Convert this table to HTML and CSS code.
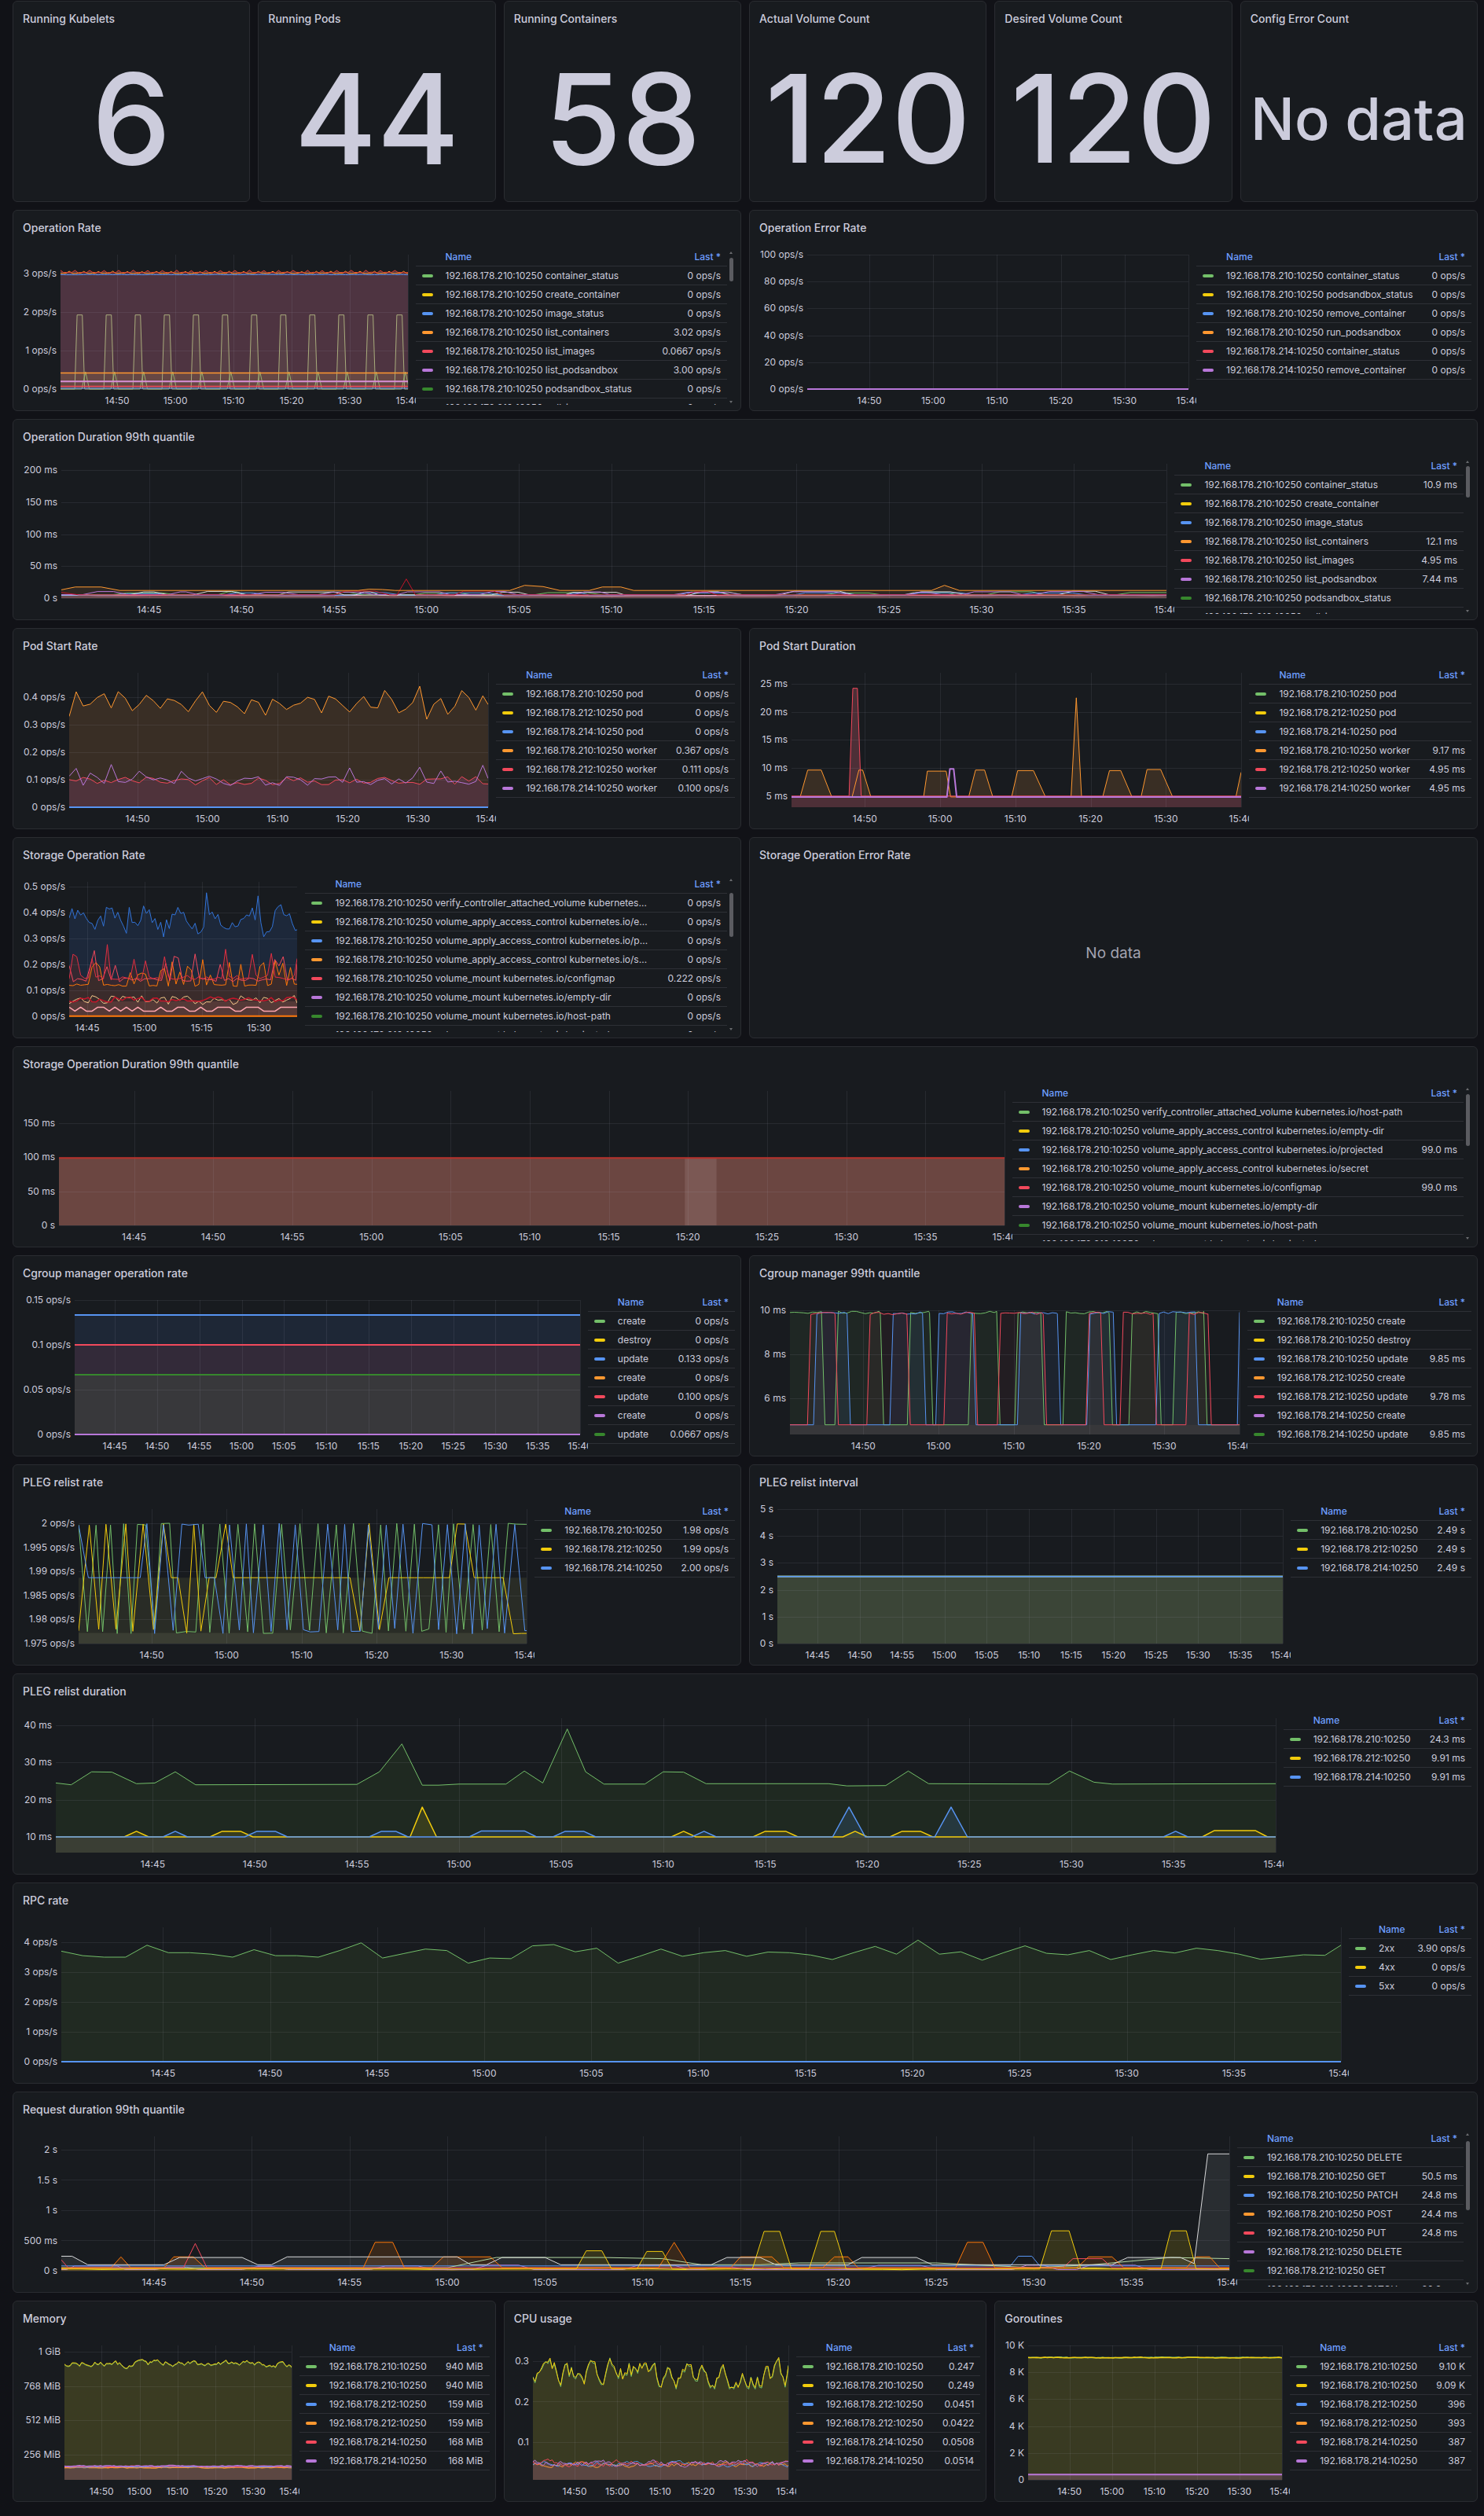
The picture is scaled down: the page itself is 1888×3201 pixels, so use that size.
FILE: index.html
```html
<!DOCTYPE html>
<html lang="en">
<head>
<meta charset="utf-8">
<title>Kubelet</title>
<link rel="stylesheet" href="styles.css">
</head>
<body>
<main class="dash">

<div class="row r6">
  <section class="panel"><h2 class="ptitle">Running Kubelets</h2><div class="stat-val">6</div></section>
  <section class="panel"><h2 class="ptitle">Running Pods</h2><div class="stat-val">44</div></section>
  <section class="panel"><h2 class="ptitle">Running Containers</h2><div class="stat-val">58</div></section>
  <section class="panel"><h2 class="ptitle">Actual Volume Count</h2><div class="stat-val md">120</div></section>
  <section class="panel"><h2 class="ptitle">Desired Volume Count</h2><div class="stat-val md">120</div></section>
  <section class="panel"><h2 class="ptitle">Config Error Count</h2><div class="stat-val sm">No data</div></section>
</div>

<div class="row r2">
  <section class="panel">
    <h2 class="ptitle">Operation Rate</h2>
    <div class="pbody">
      <div class="plot" data-chart="oprate"></div>
      <div class="legend scroll">
        <div class="lg">
          <span class="lh"></span><span class="lh">Name</span><span class="lh lv">Last *</span>
          <span class="ls"><i class="sw c1"></i></span><span class="ln">192.168.178.210:10250 container_status</span><span class="lv">0 ops/s</span>
          <span class="ls"><i class="sw c2"></i></span><span class="ln">192.168.178.210:10250 create_container</span><span class="lv">0 ops/s</span>
          <span class="ls"><i class="sw c3"></i></span><span class="ln">192.168.178.210:10250 image_status</span><span class="lv">0 ops/s</span>
          <span class="ls"><i class="sw c4"></i></span><span class="ln">192.168.178.210:10250 list_containers</span><span class="lv">3.02 ops/s</span>
          <span class="ls"><i class="sw c5"></i></span><span class="ln">192.168.178.210:10250 list_images</span><span class="lv">0.0667 ops/s</span>
          <span class="ls"><i class="sw c6"></i></span><span class="ln">192.168.178.210:10250 list_podsandbox</span><span class="lv">3.00 ops/s</span>
          <span class="ls"><i class="sw c7"></i></span><span class="ln">192.168.178.210:10250 podsandbox_status</span><span class="lv">0 ops/s</span>
          <span class="ls"><i class="sw c8"></i></span><span class="ln">192.168.178.210:10250 pull_image</span><span class="lv">0 ops/s</span>
          <span class="ls"><i class="sw c9"></i></span><span class="ln">192.168.178.210:10250 remove_container</span><span class="lv">0 ops/s</span>
          <span class="ls"><i class="sw c10"></i></span><span class="ln">192.168.178.212:10250 list_podsandbox_stats</span><span class="lv">0 ops/s</span>
        </div>
        <div class="sb"><b class="up"></b><b class="th" style="top:13px;height:30px"></b><b class="dn"></b></div>
      </div>
    </div>
  </section>
  <section class="panel">
    <h2 class="ptitle">Operation Error Rate</h2>
    <div class="pbody">
      <div class="plot" data-chart="operr"></div>
      <div class="legend">
        <div class="lg">
          <span class="lh"></span><span class="lh">Name</span><span class="lh lv">Last *</span>
          <span class="ls"><i class="sw c1"></i></span><span class="ln">192.168.178.210:10250 container_status</span><span class="lv">0 ops/s</span>
          <span class="ls"><i class="sw c2"></i></span><span class="ln">192.168.178.210:10250 podsandbox_status</span><span class="lv">0 ops/s</span>
          <span class="ls"><i class="sw c3"></i></span><span class="ln">192.168.178.210:10250 remove_container</span><span class="lv">0 ops/s</span>
          <span class="ls"><i class="sw c4"></i></span><span class="ln">192.168.178.210:10250 run_podsandbox</span><span class="lv">0 ops/s</span>
          <span class="ls"><i class="sw c5"></i></span><span class="ln">192.168.178.214:10250 container_status</span><span class="lv">0 ops/s</span>
          <span class="ls"><i class="sw c6"></i></span><span class="ln">192.168.178.214:10250 remove_container</span><span class="lv">0 ops/s</span>
        </div>
      </div>
    </div>
  </section>
</div>

<div class="row r1">
  <section class="panel">
    <h2 class="ptitle">Operation Duration 99th quantile</h2>
    <div class="pbody">
      <div class="plot" data-chart="opdur"></div>
      <div class="legend scroll">
        <div class="lg">
          <span class="lh"></span><span class="lh">Name</span><span class="lh lv">Last *</span>
          <span class="ls"><i class="sw c1"></i></span><span class="ln">192.168.178.210:10250 container_status</span><span class="lv">10.9 ms</span>
          <span class="ls"><i class="sw c2"></i></span><span class="ln">192.168.178.210:10250 create_container</span><span class="lv"></span>
          <span class="ls"><i class="sw c3"></i></span><span class="ln">192.168.178.210:10250 image_status</span><span class="lv"></span>
          <span class="ls"><i class="sw c4"></i></span><span class="ln">192.168.178.210:10250 list_containers</span><span class="lv">12.1 ms</span>
          <span class="ls"><i class="sw c5"></i></span><span class="ln">192.168.178.210:10250 list_images</span><span class="lv">4.95 ms</span>
          <span class="ls"><i class="sw c6"></i></span><span class="ln">192.168.178.210:10250 list_podsandbox</span><span class="lv">7.44 ms</span>
          <span class="ls"><i class="sw c7"></i></span><span class="ln">192.168.178.210:10250 podsandbox_status</span><span class="lv"></span>
          <span class="ls"><i class="sw c8"></i></span><span class="ln">192.168.178.210:10250 pull_image</span><span class="lv"></span>
          <span class="ls"><i class="sw c9"></i></span><span class="ln">192.168.178.212:10250 list_podsandbox_stats</span><span class="lv"></span>
        </div>
        <div class="sb"><b class="up"></b><b class="th" style="top:12px;height:40px"></b><b class="dn"></b></div>
      </div>
    </div>
  </section>
</div>

<div class="row r2">
  <section class="panel">
    <h2 class="ptitle">Pod Start Rate</h2>
    <div class="pbody">
      <div class="plot" data-chart="podrate"></div>
      <div class="legend">
        <div class="lg">
          <span class="lh"></span><span class="lh">Name</span><span class="lh lv">Last *</span>
          <span class="ls"><i class="sw c1"></i></span><span class="ln">192.168.178.210:10250 pod</span><span class="lv">0 ops/s</span>
          <span class="ls"><i class="sw c2"></i></span><span class="ln">192.168.178.212:10250 pod</span><span class="lv">0 ops/s</span>
          <span class="ls"><i class="sw c3"></i></span><span class="ln">192.168.178.214:10250 pod</span><span class="lv">0 ops/s</span>
          <span class="ls"><i class="sw c4"></i></span><span class="ln">192.168.178.210:10250 worker</span><span class="lv">0.367 ops/s</span>
          <span class="ls"><i class="sw c5"></i></span><span class="ln">192.168.178.212:10250 worker</span><span class="lv">0.111 ops/s</span>
          <span class="ls"><i class="sw c6"></i></span><span class="ln">192.168.178.214:10250 worker</span><span class="lv">0.100 ops/s</span>
        </div>
      </div>
    </div>
  </section>
  <section class="panel">
    <h2 class="ptitle">Pod Start Duration</h2>
    <div class="pbody">
      <div class="plot" data-chart="poddur"></div>
      <div class="legend">
        <div class="lg">
          <span class="lh"></span><span class="lh">Name</span><span class="lh lv">Last *</span>
          <span class="ls"><i class="sw c1"></i></span><span class="ln">192.168.178.210:10250 pod</span><span class="lv"></span>
          <span class="ls"><i class="sw c2"></i></span><span class="ln">192.168.178.212:10250 pod</span><span class="lv"></span>
          <span class="ls"><i class="sw c3"></i></span><span class="ln">192.168.178.214:10250 pod</span><span class="lv"></span>
          <span class="ls"><i class="sw c4"></i></span><span class="ln">192.168.178.210:10250 worker</span><span class="lv">9.17 ms</span>
          <span class="ls"><i class="sw c5"></i></span><span class="ln">192.168.178.212:10250 worker</span><span class="lv">4.95 ms</span>
          <span class="ls"><i class="sw c6"></i></span><span class="ln">192.168.178.214:10250 worker</span><span class="lv">4.95 ms</span>
        </div>
      </div>
    </div>
  </section>
</div>

<div class="row r2">
  <section class="panel">
    <h2 class="ptitle">Storage Operation Rate</h2>
    <div class="pbody">
      <div class="plot" data-chart="storrate"></div>
      <div class="legend scroll">
        <div class="lg">
          <span class="lh"></span><span class="lh">Name</span><span class="lh lv">Last *</span>
          <span class="ls"><i class="sw c1"></i></span><span class="ln">192.168.178.210:10250 verify_controller_attached_volume kubernetes.io/host-path</span><span class="lv">0 ops/s</span>
          <span class="ls"><i class="sw c2"></i></span><span class="ln">192.168.178.210:10250 volume_apply_access_control kubernetes.io/empty-dir</span><span class="lv">0 ops/s</span>
          <span class="ls"><i class="sw c3"></i></span><span class="ln">192.168.178.210:10250 volume_apply_access_control kubernetes.io/projected</span><span class="lv">0 ops/s</span>
          <span class="ls"><i class="sw c4"></i></span><span class="ln">192.168.178.210:10250 volume_apply_access_control kubernetes.io/secret</span><span class="lv">0 ops/s</span>
          <span class="ls"><i class="sw c5"></i></span><span class="ln">192.168.178.210:10250 volume_mount kubernetes.io/configmap</span><span class="lv">0.222 ops/s</span>
          <span class="ls"><i class="sw c6"></i></span><span class="ln">192.168.178.210:10250 volume_mount kubernetes.io/empty-dir</span><span class="lv">0 ops/s</span>
          <span class="ls"><i class="sw c7"></i></span><span class="ln">192.168.178.210:10250 volume_mount kubernetes.io/host-path</span><span class="lv">0 ops/s</span>
          <span class="ls"><i class="sw c8"></i></span><span class="ln">192.168.178.210:10250 volume_mount kubernetes.io/projected</span><span class="lv">0 ops/s</span>
        </div>
        <div class="sb"><b class="up"></b><b class="th" style="top:23px;height:56px"></b><b class="dn"></b></div>
      </div>
    </div>
  </section>
  <section class="panel">
    <h2 class="ptitle">Storage Operation Error Rate</h2>
    <div class="nodata">No data</div>
  </section>
</div>

<div class="row r1">
  <section class="panel">
    <h2 class="ptitle">Storage Operation Duration 99th quantile</h2>
    <div class="pbody">
      <div class="plot" data-chart="stordur"></div>
      <div class="legend scroll">
        <div class="lg">
          <span class="lh"></span><span class="lh">Name</span><span class="lh lv">Last *</span>
          <span class="ls"><i class="sw c1"></i></span><span class="ln">192.168.178.210:10250 verify_controller_attached_volume kubernetes.io/host-path</span><span class="lv"></span>
          <span class="ls"><i class="sw c2"></i></span><span class="ln">192.168.178.210:10250 volume_apply_access_control kubernetes.io/empty-dir</span><span class="lv"></span>
          <span class="ls"><i class="sw c3"></i></span><span class="ln">192.168.178.210:10250 volume_apply_access_control kubernetes.io/projected</span><span class="lv">99.0 ms</span>
          <span class="ls"><i class="sw c4"></i></span><span class="ln">192.168.178.210:10250 volume_apply_access_control kubernetes.io/secret</span><span class="lv"></span>
          <span class="ls"><i class="sw c5"></i></span><span class="ln">192.168.178.210:10250 volume_mount kubernetes.io/configmap</span><span class="lv">99.0 ms</span>
          <span class="ls"><i class="sw c6"></i></span><span class="ln">192.168.178.210:10250 volume_mount kubernetes.io/empty-dir</span><span class="lv"></span>
          <span class="ls"><i class="sw c7"></i></span><span class="ln">192.168.178.210:10250 volume_mount kubernetes.io/host-path</span><span class="lv"></span>
          <span class="ls"><i class="sw c8"></i></span><span class="ln">192.168.178.210:10250 volume_mount kubernetes.io/projected</span><span class="lv"></span>
        </div>
        <div class="sb"><b class="up"></b><b class="th" style="top:13px;height:66px"></b><b class="dn"></b></div>
      </div>
    </div>
  </section>
</div>

<div class="row r2">
  <section class="panel">
    <h2 class="ptitle">Cgroup manager operation rate</h2>
    <div class="pbody">
      <div class="plot" data-chart="cgrate"></div>
      <div class="legend">
        <div class="lg">
          <span class="lh"></span><span class="lh">Name</span><span class="lh lv">Last *</span>
          <span class="ls"><i class="sw c1"></i></span><span class="ln">create</span><span class="lv">0 ops/s</span>
          <span class="ls"><i class="sw c2"></i></span><span class="ln">destroy</span><span class="lv">0 ops/s</span>
          <span class="ls"><i class="sw c3"></i></span><span class="ln">update</span><span class="lv">0.133 ops/s</span>
          <span class="ls"><i class="sw c4"></i></span><span class="ln">create</span><span class="lv">0 ops/s</span>
          <span class="ls"><i class="sw c5"></i></span><span class="ln">update</span><span class="lv">0.100 ops/s</span>
          <span class="ls"><i class="sw c6"></i></span><span class="ln">create</span><span class="lv">0 ops/s</span>
          <span class="ls"><i class="sw c7"></i></span><span class="ln">update</span><span class="lv">0.0667 ops/s</span>
        </div>
      </div>
    </div>
  </section>
  <section class="panel">
    <h2 class="ptitle">Cgroup manager 99th quantile</h2>
    <div class="pbody">
      <div class="plot" data-chart="cg99"></div>
      <div class="legend">
        <div class="lg">
          <span class="lh"></span><span class="lh">Name</span><span class="lh lv">Last *</span>
          <span class="ls"><i class="sw c1"></i></span><span class="ln">192.168.178.210:10250 create</span><span class="lv"></span>
          <span class="ls"><i class="sw c2"></i></span><span class="ln">192.168.178.210:10250 destroy</span><span class="lv"></span>
          <span class="ls"><i class="sw c3"></i></span><span class="ln">192.168.178.210:10250 update</span><span class="lv">9.85 ms</span>
          <span class="ls"><i class="sw c4"></i></span><span class="ln">192.168.178.212:10250 create</span><span class="lv"></span>
          <span class="ls"><i class="sw c5"></i></span><span class="ln">192.168.178.212:10250 update</span><span class="lv">9.78 ms</span>
          <span class="ls"><i class="sw c6"></i></span><span class="ln">192.168.178.214:10250 create</span><span class="lv"></span>
          <span class="ls"><i class="sw c7"></i></span><span class="ln">192.168.178.214:10250 update</span><span class="lv">9.85 ms</span>
        </div>
      </div>
    </div>
  </section>
</div>

<div class="row r2">
  <section class="panel">
    <h2 class="ptitle">PLEG relist rate</h2>
    <div class="pbody">
      <div class="plot" data-chart="plegrate"></div>
      <div class="legend">
        <div class="lg">
          <span class="lh"></span><span class="lh">Name</span><span class="lh lv">Last *</span>
          <span class="ls"><i class="sw c1"></i></span><span class="ln">192.168.178.210:10250</span><span class="lv">1.98 ops/s</span>
          <span class="ls"><i class="sw c2"></i></span><span class="ln">192.168.178.212:10250</span><span class="lv">1.99 ops/s</span>
          <span class="ls"><i class="sw c3"></i></span><span class="ln">192.168.178.214:10250</span><span class="lv">2.00 ops/s</span>
        </div>
      </div>
    </div>
  </section>
  <section class="panel">
    <h2 class="ptitle">PLEG relist interval</h2>
    <div class="pbody">
      <div class="plot" data-chart="plegint"></div>
      <div class="legend">
        <div class="lg">
          <span class="lh"></span><span class="lh">Name</span><span class="lh lv">Last *</span>
          <span class="ls"><i class="sw c1"></i></span><span class="ln">192.168.178.210:10250</span><span class="lv">2.49 s</span>
          <span class="ls"><i class="sw c2"></i></span><span class="ln">192.168.178.212:10250</span><span class="lv">2.49 s</span>
          <span class="ls"><i class="sw c3"></i></span><span class="ln">192.168.178.214:10250</span><span class="lv">2.49 s</span>
        </div>
      </div>
    </div>
  </section>
</div>

<div class="row r1">
  <section class="panel">
    <h2 class="ptitle">PLEG relist duration</h2>
    <div class="pbody">
      <div class="plot" data-chart="plegdur"></div>
      <div class="legend">
        <div class="lg">
          <span class="lh"></span><span class="lh">Name</span><span class="lh lv">Last *</span>
          <span class="ls"><i class="sw c1"></i></span><span class="ln">192.168.178.210:10250</span><span class="lv">24.3 ms</span>
          <span class="ls"><i class="sw c2"></i></span><span class="ln">192.168.178.212:10250</span><span class="lv">9.91 ms</span>
          <span class="ls"><i class="sw c3"></i></span><span class="ln">192.168.178.214:10250</span><span class="lv">9.91 ms</span>
        </div>
      </div>
    </div>
  </section>
</div>

<div class="row r1">
  <section class="panel">
    <h2 class="ptitle">RPC rate</h2>
    <div class="pbody">
      <div class="plot" data-chart="rpc"></div>
      <div class="legend">
        <div class="lg">
          <span class="lh"></span><span class="lh">Name</span><span class="lh lv">Last *</span>
          <span class="ls"><i class="sw c1"></i></span><span class="ln">2xx</span><span class="lv">3.90 ops/s</span>
          <span class="ls"><i class="sw c2"></i></span><span class="ln">4xx</span><span class="lv">0 ops/s</span>
          <span class="ls"><i class="sw c3"></i></span><span class="ln">5xx</span><span class="lv">0 ops/s</span>
        </div>
      </div>
    </div>
  </section>
</div>

<div class="row r1">
  <section class="panel">
    <h2 class="ptitle">Request duration 99th quantile</h2>
    <div class="pbody">
      <div class="plot" data-chart="reqdur"></div>
      <div class="legend scroll">
        <div class="lg">
          <span class="lh"></span><span class="lh">Name</span><span class="lh lv">Last *</span>
          <span class="ls"><i class="sw c1"></i></span><span class="ln">192.168.178.210:10250 DELETE</span><span class="lv"></span>
          <span class="ls"><i class="sw c2"></i></span><span class="ln">192.168.178.210:10250 GET</span><span class="lv">50.5 ms</span>
          <span class="ls"><i class="sw c3"></i></span><span class="ln">192.168.178.210:10250 PATCH</span><span class="lv">24.8 ms</span>
          <span class="ls"><i class="sw c4"></i></span><span class="ln">192.168.178.210:10250 POST</span><span class="lv">24.4 ms</span>
          <span class="ls"><i class="sw c5"></i></span><span class="ln">192.168.178.210:10250 PUT</span><span class="lv">24.8 ms</span>
          <span class="ls"><i class="sw c6"></i></span><span class="ln">192.168.178.212:10250 DELETE</span><span class="lv"></span>
          <span class="ls"><i class="sw c7"></i></span><span class="ln">192.168.178.212:10250 GET</span><span class="lv"></span>
          <span class="ls"><i class="sw c8"></i></span><span class="ln">192.168.178.212:10250 PATCH</span><span class="lv">20.3 ms</span>
        </div>
        <div class="sb"><b class="up"></b><b class="th" style="top:15px;height:88px"></b><b class="dn"></b></div>
      </div>
    </div>
  </section>
</div>

<div class="row r3">
  <section class="panel">
    <h2 class="ptitle">Memory</h2>
    <div class="pbody">
      <div class="plot" data-chart="mem"></div>
      <div class="legend">
        <div class="lg">
          <span class="lh"></span><span class="lh">Name</span><span class="lh lv">Last *</span>
          <span class="ls"><i class="sw c1"></i></span><span class="ln">192.168.178.210:10250</span><span class="lv">940 MiB</span>
          <span class="ls"><i class="sw c2"></i></span><span class="ln">192.168.178.210:10250</span><span class="lv">940 MiB</span>
          <span class="ls"><i class="sw c3"></i></span><span class="ln">192.168.178.212:10250</span><span class="lv">159 MiB</span>
          <span class="ls"><i class="sw c4"></i></span><span class="ln">192.168.178.212:10250</span><span class="lv">159 MiB</span>
          <span class="ls"><i class="sw c5"></i></span><span class="ln">192.168.178.214:10250</span><span class="lv">168 MiB</span>
          <span class="ls"><i class="sw c6"></i></span><span class="ln">192.168.178.214:10250</span><span class="lv">168 MiB</span>
        </div>
      </div>
    </div>
  </section>
  <section class="panel">
    <h2 class="ptitle">CPU usage</h2>
    <div class="pbody">
      <div class="plot" data-chart="cpu"></div>
      <div class="legend">
        <div class="lg">
          <span class="lh"></span><span class="lh">Name</span><span class="lh lv">Last *</span>
          <span class="ls"><i class="sw c1"></i></span><span class="ln">192.168.178.210:10250</span><span class="lv">0.247</span>
          <span class="ls"><i class="sw c2"></i></span><span class="ln">192.168.178.210:10250</span><span class="lv">0.249</span>
          <span class="ls"><i class="sw c3"></i></span><span class="ln">192.168.178.212:10250</span><span class="lv">0.0451</span>
          <span class="ls"><i class="sw c4"></i></span><span class="ln">192.168.178.212:10250</span><span class="lv">0.0422</span>
          <span class="ls"><i class="sw c5"></i></span><span class="ln">192.168.178.214:10250</span><span class="lv">0.0508</span>
          <span class="ls"><i class="sw c6"></i></span><span class="ln">192.168.178.214:10250</span><span class="lv">0.0514</span>
        </div>
      </div>
    </div>
  </section>
  <section class="panel">
    <h2 class="ptitle">Goroutines</h2>
    <div class="pbody">
      <div class="plot" data-chart="gor"></div>
      <div class="legend">
        <div class="lg">
          <span class="lh"></span><span class="lh">Name</span><span class="lh lv">Last *</span>
          <span class="ls"><i class="sw c1"></i></span><span class="ln">192.168.178.210:10250</span><span class="lv">9.10 K</span>
          <span class="ls"><i class="sw c2"></i></span><span class="ln">192.168.178.210:10250</span><span class="lv">9.09 K</span>
          <span class="ls"><i class="sw c3"></i></span><span class="ln">192.168.178.212:10250</span><span class="lv">396</span>
          <span class="ls"><i class="sw c4"></i></span><span class="ln">192.168.178.212:10250</span><span class="lv">393</span>
          <span class="ls"><i class="sw c5"></i></span><span class="ln">192.168.178.214:10250</span><span class="lv">387</span>
          <span class="ls"><i class="sw c6"></i></span><span class="ln">192.168.178.214:10250</span><span class="lv">387</span>
        </div>
      </div>
    </div>
  </section>
</div>

</main>
<script src="charts.js"></script>
</body>
</html>
```

FILE: styles.css
```css
* { box-sizing: border-box; }
html, body { margin: 0; background: #111217; }
body {
  padding: 1px 8px 18px 16px;
  font-family: Inter, "Noto Sans", sans-serif;
  color: #ccccdc;
}
.row { display: grid; gap: 10px; height: 256px; margin-bottom: 10px; }
.row:last-child { margin-bottom: 0; }
.r6 { grid-template-columns: repeat(6, minmax(0, 1fr)); }
.r3 { grid-template-columns: repeat(3, minmax(0, 1fr)); }
.r2 { grid-template-columns: repeat(2, minmax(0, 1fr)); }
.r1 { grid-template-columns: minmax(0, 1fr); }

.panel {
  background: #181b1f;
  border: 1px solid #2a2c31;
  border-radius: 6px;
  display: flex;
  flex-direction: column;
  overflow: hidden;
  min-width: 0;
}
.ptitle {
  margin: 0;
  height: 40px;
  flex: none;
  display: flex;
  align-items: center;
  padding: 2px 12px 0;
  font-size: 14px;
  font-weight: 500;
  color: #ccccdc;
  white-space: nowrap;
}
.pbody { flex: 1; min-height: 0; display: flex; padding: 0 7px; }
.plot { flex: 1; min-width: 0; height: 100%; }

.stat-val {
  flex: 1;
  display: flex;
  align-items: center;
  justify-content: center;
  padding-top: 4px;
  font-size: 160px;
  font-weight: 500;
  line-height: 1;
  color: #ccccdc;
  white-space: nowrap;
}
.stat-val.md { font-size: 156px; }
.stat-val.sm { font-size: 74px; }
.nodata {
  flex: 1;
  display: flex;
  align-items: center;
  justify-content: center;
  padding-bottom: 2px;
  font-size: 19px;
  color: rgba(204, 204, 220, 0.78);
}

.legend {
  position: relative;
  flex: none;
  align-self: flex-start;
  margin-top: 7px;
  max-height: 200px;
  max-width: 60%;
  overflow: hidden;
}
.legend.scroll { padding-right: 10px; }
.lg {
  display: grid;
  grid-template-columns: 38px minmax(0, max-content) max-content;
  font-size: 12px;
  line-height: 23px;
}
.lg > span {
  height: 24px;
  border-bottom: 1px solid rgba(204, 204, 220, 0.12);
  white-space: nowrap;
}
.lh { color: #6e9fff; font-weight: 500; }
.ls { display: flex; align-items: center; padding-left: 8px; }
.ln { padding-right: 8px; overflow: hidden; text-overflow: ellipsis; }
.lv { padding: 0 8px 0 16px; text-align: right; }
.sw { display: block; width: 14px; height: 4px; border-radius: 2px; }
.c1 { background: #73bf69; }
.c2 { background: #f2cc0c; }
.c3 { background: #5794f2; }
.c4 { background: #ff9830; }
.c5 { background: #f2495c; }
.c6 { background: #b877d9; }
.c7 { background: #37872d; }
.c8 { background: #e0b400; }
.c9 { background: #1f60c4; }
.c10 { background: #fa6400; }

.sb { position: absolute; top: 0; right: 0; bottom: 0; width: 10px; }
.sb .th { position: absolute; left: 3px; width: 5px; border-radius: 3px; background: #5b5c61; }
.sb .up, .sb .dn {
  position: absolute;
  left: 3px;
  width: 0;
  height: 0;
  border-left: 2.5px solid transparent;
  border-right: 2.5px solid transparent;
}
.sb .up { top: 5px; border-bottom: 3px solid #6b6c70; }
.sb .dn { bottom: 2px; border-top: 3px solid #6b6c70; }

.chart { display: block; }
.chart text { font-family: Inter, "Noto Sans", sans-serif; font-size: 12px; fill: #ccccdc; }
```

FILE: charts.js
```js
(function () {
  var T0 = 0.25, T1 = 60, NS = 'http://www.w3.org/2000/svg';

  function rng(a) {
    return function () {
      a |= 0; a = a + 0x6D2B79F5 | 0;
      var t = Math.imul(a ^ a >>> 15, 1 | a);
      t = t + Math.imul(t ^ t >>> 7, 61 | t) ^ t;
      return ((t ^ t >>> 14) >>> 0) / 4294967296;
    };
  }
  function flat(v) { return [[T0, v], [T1, v]]; }
  function steps(seed, step, f) {
    var r = rng(seed), pts = [], i = 0, t;
    for (;;) { t = T0 + i * step; if (t > T1 + 1e-6) break; pts.push([t, f(r, t, i)]); i++; }
    if (pts[pts.length - 1][0] < T1 - 1e-6) pts.push([T1, f(r, T1, i)]);
    return pts;
  }
  function traps(base, list) {
    var pts = [[T0, base]];
    list.forEach(function (s) { pts.push([s[0], base], [s[1], s[4]], [s[2], s[4]], [s[3], base]); });
    pts.push([T1, base]);
    return pts;
  }
  function vals(arr, step) { return arr.map(function (v, i) { return [Math.min(T1, T0 + i * step), v]; }); }
  function walk(seed, step, mean, amp, lo, hi) {
    var v = mean;
    return steps(seed, step, function (r) {
      v += (mean - v) * 0.35 + (r() - 0.5) * amp;
      v = Math.max(lo, Math.min(hi, v));
      return v;
    });
  }
  function bumpy(seed, base, lo, hi, gap) {
    var r = rng(seed), pts = [[T0, base]], t = T0 + r() * gap;
    while (t < T1 - 1.5) {
      var rise = 0.4 + r() * 0.5, w = 0.3 + r() * 2.2, h = lo + r() * (hi - lo);
      pts.push([t, base], [t + rise, h], [t + rise + w, h], [t + 2 * rise + w, base]);
      t += 2 * rise + w + 0.5 + r() * gap;
    }
    pts.push([T1, base]);
    return pts;
  }
  function spiky(seed, step, base, lo, hi, prob) {
    var r = rng(seed);
    return steps(seed + 5, step, function () {
      return r() < prob ? lo + r() * (hi - lo) : base + (r() - 0.5) * (lo - base) * 0.3;
    });
  }
  function square(seed, lo, hi, high) {
    var r = rng(seed), n = rng(seed + 99), t = T0, pts = [], end, s;
    function v(h) { return h ? hi + (n() - 0.5) * 0.12 : lo; }
    pts.push([t, v(high)]);
    for (;;) {
      end = t + 1.2 + r() * 4.5;
      if (end >= T1) { pts.push([T1, v(high)]); break; }
      if (high) { for (s = t + 0.6; s < end; s += 0.6) pts.push([s, v(true)]); }
      pts.push([end, v(high)]);
      high = !high; t = end + 0.45;
      if (t >= T1) { pts.push([T1, v(high)]); break; }
      pts.push([t, v(high)]);
    }
    return pts;
  }
  function zig(seed, step, lo, hi, flatV, runs) {
    var r = rng(seed), pts = [], t = T0, up = r() < 0.5;
    while (t <= T1 + 1e-6) {
      var inFlat = runs.some(function (a) { return t >= a[0] && t <= a[1]; });
      var v = inFlat ? flatV : (up ? hi - r() * 0.0004 : lo + r() * 0.0012);
      pts.push([Math.min(t, T1), v]);
      up = !up;
      if (!inFlat && r() < 0.2) up = !up;
      t += step * (0.8 + r() * 0.5);
    }
    if (pts[pts.length - 1][0] < T1) pts.push([T1, pts[pts.length - 1][1]]);
    return pts;
  }
  function tk(a, f) { return a.map(function (v) { return [v, f(v)]; }); }
  function setAt(pts, t, v) {
    var best = 0;
    pts.forEach(function (p, i) { if (Math.abs(p[0] - t) < Math.abs(pts[best][0] - t)) best = i; });
    pts[best][1] = v;
  }

  var C = {};

  (function () {
    var cs = [], k;
    for (k = 0; k < 12; k++) cs.push(3.6 + 5 * k);
    var big = traps(0, cs.map(function (c) { return [c - 0.9, c - 0.5, c + 0.4, c + 0.8, 1.93]; }));
    var small = traps(0, cs.map(function (c) { return [c + 0.3, c + 0.95, c + 0.95, c + 1.6, 0.45]; }));
    var top = steps(11, 0.5, function (r, t) { var ph = t % 2.5; return 3.03 + (ph < 0.7 ? 0.06 * Math.sin(ph / 0.7 * Math.PI) : 0) + r() * 0.015; });
    var top2 = steps(12, 0.5, function (r, t) { var ph = (t + 1.2) % 2.5; return 3.01 + (ph < 0.7 ? 0.05 * Math.sin(ph / 0.7 * Math.PI) : 0) + r() * 0.015; });
    var blue = steps(13, 0.5, function (r) { return 2.975 + r() * 0.01; });
    C.oprate = {
      y: [0, 3.5], ticks: tk([0, 1, 2, 3], function (v) { return v + ' ops/s'; }), xs: 10,
      fills: [{ d: top, c: '#4e3441' }, { d: big, c: 'rgba(200,205,140,0.08)' }, { d: flat(0.42), c: '#674744' }],
      lines: [
        { d: blue, c: '#5794f2' }, { d: top2, c: '#ff9830' }, { d: top, c: '#e0402f' },
        { d: big, c: '#a9ac7c' }, { d: small, c: '#96b06e' },
        { d: flat(0.42), c: '#ff9830', w: 1.5 }, { d: flat(0.2), c: '#d88fd6', w: 2 },
        { d: flat(0.07), c: '#f2495c', w: 1.5 }, { d: flat(0.02), c: '#5794f2' }
      ]
    };
  })();

  C.operr = {
    y: [0, 100], ticks: tk([0, 20, 40, 60, 80, 100], function (v) { return v + ' ops/s'; }), xs: 10,
    fills: [], lines: [{ d: flat(0), c: '#b877d9', w: 2 }]
  };

  (function () {
    var orange = [[T0, 13], [1, 17.5], [2.4, 17.5], [3.4, 12], [16.3, 12], [16.9, 14], [17.6, 13.5], [18.3, 12], [24.5, 12], [25.3, 20], [26.3, 18], [27.2, 12], [28.8, 12], [29.5, 17.5], [30.5, 17.5], [31.2, 12], [47.3, 12], [48, 20], [48.8, 12], [T1, 12]];
    var red = [[T0, 9], [1.2, 5], [15, 5], [15.6, 11], [17.2, 11], [18, 5], [18.4, 5], [18.9, 30], [19.4, 5], [21.5, 5], [22, 11], [23.6, 11], [24.2, 5], [34, 5], [34.5, 10], [35.2, 10], [35.7, 5], [T1, 5]];
    C.opdur = {
      y: [0, 210], ticks: [[0, '0 s'], [50, '50 ms'], [100, '100 ms'], [150, '150 ms'], [200, '200 ms']], xs: 5,
      fills: [{ d: orange, c: '#2f2823' }, { d: walk(35, 1, 4.3, 0.6, 3.8, 4.8), c: '#6c4c51' }],
      lines: [
        { d: walk(36, 1, 4.3, 0.6, 3.8, 4.8), c: '#e8a2c2', w: 1.5 },
        { d: bumpy(31, 5, 8, 10, 4), c: '#73bf69' },
        { d: bumpy(33, 4.5, 7, 9, 5), c: '#5794f2' },
        { d: bumpy(34, 5, 9, 11, 6), c: '#d8d9da' },
        { d: bumpy(32, 5.5, 9, 10.5, 3), c: '#b877d9' },
        { d: red, c: '#c4162a' },
        { d: orange, c: '#ff9830' }
      ]
    };
  })();

  (function () {
    var orange = steps(41, 1, function (r, t) { if (t < 1) return 0.33; return 0.38 + 0.02 * Math.sin(t * 1.7) + (r() - 0.5) * 0.065; });
    setAt(orange, 50, 0.44); setAt(orange, 51.5, 0.32); setAt(orange, 7, 0.42);
    var red = steps(42, 1, function (r) { return 0.097 + (r() - 0.5) * 0.032; });
    var purple = steps(43, 1, function (r) { return 0.095 + (r() - 0.5) * 0.035 + (r() < 0.07 ? 0.045 : 0); });
    C.podrate = {
      y: [0, 0.4886], ticks: tk([0, 0.1, 0.2, 0.3, 0.4], function (v) { return v + ' ops/s'; }), xs: 10,
      fills: [{ d: orange, c: '#392e25' }, { d: red, c: '#4f333b' }],
      lines: [{ d: orange, c: '#ff9830' }, { d: red, c: '#f2495c' }, { d: purple, c: '#b877d9' }, { d: flat(0), c: '#5794f2', w: 2 }]
    };
  })();

  (function () {
    var orange = traps(4.8, [[1.4, 2.4, 4.2, 5.6, 9.6], [8.3, 9.2, 9.7, 10.8, 9.6], [17.8, 18.3, 20.8, 21.4, 9.4], [23.8, 24.7, 25.9, 27, 9.6], [29.5, 30.3, 32.4, 34, 9.5], [37.4, 38.1, 38.1, 38.8, 22.5], [41.6, 42.5, 44, 45.5, 9.5], [46.7, 47.5, 49.3, 50.9, 9.7]]);
    orange.pop(); orange.push([59.3, 4.8], [T1, 9.2]);
    var red = [[T0, 4.95], [7.9, 4.95], [8.4, 24.2], [9.0, 24.2], [9.5, 4.95], [T1, 4.95]];
    var purple = [[T0, 4.8], [20.9, 4.8], [21.3, 9.8], [21.8, 9.8], [22.2, 4.8], [T1, 4.8]];
    C.poddur = {
      y: [2.96, 26.96], ticks: tk([5, 10, 15, 20, 25], function (v) { return v + ' ms'; }), xs: 10,
      fills: [{ d: orange, c: '#392e24' }, { d: red, c: '#4d2f37' }],
      lines: [{ d: orange, c: '#ff9830' }, { d: red, c: '#f2495c' }, { d: purple, c: '#b877d9', w: 2 }]
    };
  })();

  (function () {
    var blue = steps(61, 0.75, function (r, t) { var v = 0.37 + 0.035 * Math.sin(t * 0.7) + (r() - 0.5) * 0.06; if (r() < 0.07) v += 0.08; return v; });
    var red1 = spiky(62, 1, 0.15, 0.21, 0.28, 0.3);
    var red2 = spiky(63, 1.1, 0.14, 0.19, 0.26, 0.25);
    var orng = spiky(64, 1, 0.12, 0.15, 0.22, 0.3);
    C.storrate = {
      y: [0, 0.518], ticks: tk([0, 0.1, 0.2, 0.3, 0.4, 0.5], function (v) { return v + ' ops/s'; }), xs: 15,
      fills: [{ d: blue, c: '#1d283a' }, { d: red1, c: '#352830' }, { d: orng, c: '#3a2b2b' }, { d: flat(0.058), c: '#553937' }],
      lines: [
        { d: blue, c: '#3274d9' }, { d: orng, c: '#ff780a' }, { d: red2, c: '#f2495c' }, { d: red1, c: '#e02f44' },
        { d: steps(65, 1, function (r) { return 0.045 + r() * 0.035; }), c: '#f6c98a' },
        { d: steps(66, 1, function (r) { return 0.055 + r() * 0.02; }), c: '#c4162a', w: 1.5 },
        { d: steps(67, 1.5, function (r) { return r() < 0.5 ? 0.02 : 0.035; }), c: '#ffa6b0', w: 1.5 },
        { d: flat(0.001), c: '#ff780a', w: 2 }
      ]
    };
  })();

  C.stordur = {
    y: [0, 197.3], ticks: [[0, '0 s'], [50, '50 ms'], [100, '100 ms'], [150, '150 ms']], xs: 5,
    fills: [{ d: flat(99), c: '#6b4641' }, { d: [[39.8, 99], [41.8, 99]], c: '#7b5854' }],
    lines: [{ d: flat(99), c: '#b8302a', w: 2 }]
  };

  C.cgrate = {
    y: [0, 0.15], ticks: [[0, '0 ops/s'], [0.05, '0.05 ops/s'], [0.1, '0.1 ops/s'], [0.15, '0.15 ops/s']], xs: 5,
    fills: [{ d: flat(0.1333), c: '#1e2736' }, { d: flat(0.1), c: '#332a39' }, { d: flat(0.0667), c: '#38383b' }],
    lines: [{ d: flat(0.1333), c: '#5794f2', w: 2 }, { d: flat(0.1), c: '#f2495c', w: 2 }, { d: flat(0.0667), c: '#37872d', w: 2 }, { d: flat(0), c: '#b877d9', w: 2 }]
  };

  (function () {
    var g = square(91, 4.8, 9.9, true), b = square(92, 4.8, 9.88, false), r = square(93, 4.8, 9.86, false);
    C.cg99 = {
      y: [4.36, 10], top: 29, ticks: tk([6, 8, 10], function (v) { return v + ' ms'; }), xs: 10,
      fills: [{ d: g, c: 'rgba(115,191,105,0.08)' }, { d: b, c: 'rgba(87,148,242,0.08)' }, { d: r, c: 'rgba(242,73,92,0.05)' }, { d: flat(4.8), c: '#37373a' }],
      lines: [{ d: g, c: '#73bf69' }, { d: b, c: '#5794f2' }, { d: r, c: '#f2495c' }]
    };
  })();

  C.plegrate = {
    y: [1.975, 2.00294],
    ticks: [[1.975, '1.975 ops/s'], [1.98, '1.98 ops/s'], [1.985, '1.985 ops/s'], [1.99, '1.99 ops/s'], [1.995, '1.995 ops/s'], [2, '2 ops/s']], xs: 10,
    fills: [{ d: flat(1.9887), c: '#292c26' }, { d: flat(1.9772), c: '#3a3d33' }],
    lines: [
      { d: zig(101, 1.05, 1.977, 2.0, 1.9887, []), c: '#73bf69' },
      { d: zig(102, 1.1, 1.977, 2.0, 1.9887, [[12.1, 13.9], [16.8, 19.3], [19.9, 36.8], [39.2, 39.8], [41, 49.8], [52, 57]]), c: '#f2cc0c' },
      { d: zig(103, 1.05, 1.977, 2.0, 1.9887, [[0.4, 8.7], [17, 18.6]]), c: '#5794f2' }
    ]
  };

  C.plegint = {
    y: [0, 5], ticks: tk([0, 1, 2, 3, 4, 5], function (v) { return v + ' s'; }), xs: 5,
    fills: [{ d: flat(2.49), c: '#3b4537' }],
    lines: [{ d: flat(2.49), c: '#73bf69', w: 2 }, { d: flat(2.49), c: '#f2cc0c', w: 2 }, { d: flat(2.49), c: '#5794f2', w: 2 }]
  };

  (function () {
    var g = [[T0, 24.5], [1, 24], [2, 27.5], [3, 27.4], [4.2, 24.3], [5.1, 24.5], [6.1, 27.5], [7.1, 24], [15, 24.1], [16.1, 27.5], [17.2, 35], [18.2, 23.9], [19, 23.9], [20, 24.2], [22.3, 24.2], [23.2, 27.7], [24.1, 24.5], [25.3, 39], [26.2, 27.5], [27.1, 24.2], [29.1, 24.2], [30, 27.5], [31, 27.4], [32.1, 24.3], [38.1, 24.3], [39, 23.7], [40.9, 23.8], [42, 27.7], [43, 24.3], [48.9, 24.2], [49.9, 27.7], [51.1, 24.7], [52, 24.2], [T1, 24.3]];
    var y = traps(10, [[3.6, 4.2, 4.2, 4.8, 11.5], [7.8, 8.4, 9.3, 9.9, 11.5], [17.6, 18.2, 18.2, 18.9, 18], [30.4, 31, 31, 31.6, 11.5], [34.4, 35, 36, 36.6, 11.5], [38.8, 39.4, 39.4, 40, 11.5], [41.1, 41.7, 42.6, 43.2, 11.5], [56.4, 57, 59, 59.6, 11.7]]);
    var b = traps(10, [[5.5, 6.1, 6.1, 6.7, 11.5], [9.5, 10.1, 11, 11.6, 11.5], [15.6, 16.2, 16.9, 17.5, 11.5], [20.5, 21.1, 23.2, 23.8, 11.6], [24.6, 25.2, 26.1, 26.7, 11.5], [31.4, 32, 32, 32.6, 11.5], [38.3, 39.1, 39.1, 39.9, 18], [43.3, 44.1, 44.1, 44.9, 18], [54.5, 55.1, 55.1, 55.7, 11.5]]);
    C.plegdur = {
      y: [5.77, 41.9], ticks: tk([10, 20, 30, 40], function (v) { return v + ' ms'; }), xs: 5,
      fills: [{ d: g, c: '#1f2921' }, { d: y, c: 'rgba(242,204,12,0.12)' }, { d: b, c: 'rgba(87,148,242,0.14)' }, { d: flat(10), c: '#3a3e34' }],
      lines: [{ d: g, c: '#73bf69' }, { d: y, c: '#f2cc0c', w: 1.5 }, { d: b, c: '#5794f2', w: 1.5 }]
    };
  })();

  (function () {
    var v = [3.7, 3.55, 3.5, 3.5, 3.9, 3.65, 3.65, 3.6, 3.5, 3.75, 3.55, 3.55, 3.5, 3.72, 3.98, 3.47, 3.62, 3.77, 3.72, 3.3, 3.47, 3.45, 3.88, 3.92, 3.68, 3.8, 3.3, 3.53, 3.77, 3.53, 3.65, 3.72, 3.53, 3.67, 3.65, 3.57, 3.42, 3.65, 3.86, 3.6, 4.07, 3.6, 3.68, 3.4, 3.65, 3.88, 3.63, 3.58, 3.72, 3.42, 3.58, 3.72, 3.64, 3.8, 3.72, 3.6, 3.43, 3.5, 3.58, 3.56, 3.9];
    var g = vals(v, 1);
    C.rpc = {
      y: [0, 4.5], ticks: tk([0, 1, 2, 3, 4], function (x) { return x + ' ops/s'; }), xs: 5,
      fills: [{ d: g, c: '#212a22' }],
      lines: [{ d: g, c: '#73bf69' }, { d: flat(0), c: '#5794f2', w: 2 }]
    };
  })();

  (function () {
    var white = [[T0, 0.24], [0.8, 0.24], [1.6, 0.1], [5.5, 0.1], [6.3, 0.22], [9.5, 0.22], [10.3, 0.1], [11, 0.1], [11.8, 0.23], [20.5, 0.23], [21.2, 0.1], [22, 0.1], [22.8, 0.22], [25, 0.22], [25.8, 0.1], [33.5, 0.1], [34.3, 0.22], [36, 0.22], [36.8, 0.1], [40.5, 0.1], [41.2, 0.22], [44, 0.22], [44.8, 0.1], [54, 0.1], [54.8, 0.22], [57.5, 0.22], [58.2, 0.12], [58.9, 1.93], [T1, 1.93]];
    var pale = [[T0, 0.05], [20, 0.05], [22.5, 0.22], [28, 0.22], [31, 0.2], [33, 0.1], [36, 0.1], [38, 0.13], [45, 0.13], [50, 0.05], [53, 0.1], [57, 0.22], [T1, 0.2]];
    var yel = traps(0.03, [[26.6, 27.1, 27.9, 28.4, 0.33], [29.7, 30.2, 31, 31.5, 0.32], [35.6, 36.2, 37, 37.6, 0.65], [38.5, 39.1, 39.8, 40.4, 0.65], [50.3, 50.9, 51.8, 52.4, 0.66], [56.5, 57, 57.8, 58.3, 0.66]]);
    var org = traps(0.05, [[2.8, 3.3, 3.3, 3.8, 0.23], [5.5, 6, 7, 7.6, 0.23], [15.7, 16.3, 17.2, 17.8, 0.47], [19.2, 19.8, 22.2, 22.8, 0.23], [30.8, 31.6, 31.6, 32.4, 0.47], [34.5, 35, 36.6, 37.2, 0.23], [39.2, 39.8, 40.5, 41, 0.23], [46, 46.6, 47.4, 48, 0.47], [52.2, 52.8, 54, 54.6, 0.23], [57.8, 58.3, 59, 59.5, 0.23]]);
    var red = [[T0, 0.18], [0.6, 0.05], [6.5, 0.05], [7.1, 0.45], [7.7, 0.05], [51.5, 0.05], [52, 0.2], [53.5, 0.2], [54, 0.05], [T1, 0.05]];
    var blue = [[T0, 0.08], [48.8, 0.08], [49.2, 0.24], [49.9, 0.24], [50.3, 0.08], [T1, 0.08]];
    C.reqdur = {
      y: [0, 2.22], ticks: [[0, '0 s'], [0.5, '500 ms'], [1, '1 s'], [1.5, '1.5 s'], [2, '2 s']], xs: 5,
      fills: [{ d: white, c: 'rgba(200,205,215,0.1)' }, { d: org, c: 'rgba(255,120,10,0.14)' }, { d: yel, c: 'rgba(242,204,12,0.14)' }],
      lines: [
        { d: walk(171, 1, 0.03, 0.02, 0.01, 0.06), c: '#fade2a' },
        { d: bumpy(172, 0.02, 0.06, 0.1, 6), c: '#b877d9' },
        { d: blue, c: '#5794f2' }, { d: pale, c: '#b3d9a2' }, { d: red, c: '#f2495c' },
        { d: org, c: '#ff780a' }, { d: yel, c: '#f2cc0c' }, { d: white, c: '#d8d9da' }
      ]
    };
  })();

  (function () {
    var yl = walk(151, 0.5, 940, 40, 890, 985);
    var gr = yl.map(function (p) { return [p[0], p[1] - 4]; });
    var lowP = walk(152, 0.5, 171, 6, 163, 178);
    C.mem = {
      y: [68.4, 1070.9], ticks: [[256, '256 MiB'], [512, '512 MiB'], [768, '768 MiB'], [1024, '1 GiB']], xs: 10,
      fills: [{ d: yl, c: '#3a3b22' }, { d: lowP, c: '#5c4742' }],
      lines: [
        { d: gr, c: '#73bf69' }, { d: yl, c: '#f2cc0c' },
        { d: walk(153, 0.5, 160, 5, 155, 166), c: '#ff9830', w: 1.5 },
        { d: walk(154, 0.5, 165, 5, 160, 170), c: '#5794f2' },
        { d: walk(155, 0.5, 169, 5, 164, 174), c: '#f2495c' },
        { d: lowP, c: '#b877d9', w: 1.5 }
      ]
    };
  })();

  (function () {
    var yl = walk(161, 0.5, 0.27, 0.05, 0.235, 0.31);
    var gr = yl.map(function (p, i) { return [p[0], p[1] - 0.004 + (i % 3 === 0 ? 0.006 : 0)]; });
    var lowP = walk(162, 0.5, 0.048, 0.012, 0.038, 0.058);
    C.cpu = {
      y: [0.0068, 0.3388], ticks: tk([0.1, 0.2, 0.3], function (v) { return String(v); }), xs: 10,
      fills: [{ d: yl, c: '#393a22' }, { d: lowP, c: '#5b4642' }],
      lines: [
        { d: gr, c: '#73bf69' }, { d: yl, c: '#f2cc0c' },
        { d: walk(163, 0.5, 0.044, 0.01, 0.035, 0.052), c: '#ff9830' },
        { d: walk(164, 0.5, 0.046, 0.01, 0.037, 0.054), c: '#5794f2' },
        { d: walk(165, 0.5, 0.049, 0.012, 0.039, 0.058), c: '#f2495c' },
        { d: lowP, c: '#b877d9' }
      ]
    };
  })();

  (function () {
    var yl = walk(181, 0.5, 9100, 40, 9060, 9140);
    C.gor = {
      y: [0, 10000], ticks: [[0, '0'], [2000, '2 K'], [4000, '4 K'], [6000, '6 K'], [8000, '8 K'], [10000, '10 K']], xs: 10,
      fills: [{ d: yl, c: '#393a22' }, { d: flat(395), c: '#5a4944' }],
      lines: [{ d: yl, c: '#73bf69', w: 1.5 }, { d: walk(182, 0.5, 9095, 40, 9060, 9140), c: '#f2cc0c', w: 1.5 }, { d: flat(390), c: '#f2495c' }, { d: flat(395), c: '#b877d9', w: 2 }]
    };
  })();

  function fmt(m) {
    var tot = 14 * 60 + 40 + m, h = Math.floor(tot / 60), mm = tot % 60;
    return h + ':' + (mm < 10 ? '0' : '') + mm;
  }
  function mk(tag, attrs, parent) {
    var e = document.createElementNS(NS, tag);
    for (var k in attrs) e.setAttribute(k, attrs[k]);
    parent.appendChild(e);
    return e;
  }
  function f1(n) { return n.toFixed(1); }

  function render(el, cfg, idx) {
    var W = el.clientWidth, H = el.clientHeight;
    var svg = mk('svg', { width: W, height: H, 'class': 'chart' }, el);
    var TOP = cfg.top || 16, BOT = 187;
    var lbls = cfg.ticks.map(function (tv) { var t = mk('text', { 'text-anchor': 'end' }, svg); t.textContent = tv[1]; return t; });
    var maxW = 0;
    lbls.forEach(function (t) { maxW = Math.max(maxW, t.getComputedTextLength()); });
    var L = Math.round(maxW) + 11, R = W - 10, y0 = cfg.y[0], y1 = cfg.y[1];
    function X(t) { return L + (t - T0) / (T1 - T0) * (R - L); }
    function Y(v) { return BOT - (v - y0) / (y1 - y0) * (BOT - TOP); }
    lbls.forEach(function (t, i) { t.setAttribute('x', L - 5); t.setAttribute('y', f1(Y(cfg.ticks[i][0]) + 4)); });

    var id = 'clip' + idx;
    var defs = mk('defs', {}, svg);
    var cp = mk('clipPath', { id: id }, defs);
    mk('rect', { x: L, y: TOP - 2, width: R - L, height: BOT - TOP + 4 }, cp);

    var gf = mk('g', { 'clip-path': 'url(#' + id + ')' }, svg);
    (cfg.fills || []).forEach(function (f) {
      var base = f.b != null ? f.b : y0, d = 'M' + f1(X(f.d[0][0])) + ' ' + f1(Y(base));
      f.d.forEach(function (p) { d += 'L' + f1(X(p[0])) + ' ' + f1(Y(p[1])); });
      d += 'L' + f1(X(f.d[f.d.length - 1][0])) + ' ' + f1(Y(base)) + 'Z';
      mk('path', { d: d, fill: f.c }, gf);
    });

    var gg = mk('g', { stroke: 'rgba(204,204,220,0.09)', 'stroke-width': 1 }, svg);
    cfg.ticks.forEach(function (tv) { var y = Math.round(Y(tv[0])) + 0.5; mk('line', { x1: L, x2: R, y1: y, y2: y }, gg); });
    var first = cfg.xs === 15 ? 5 : cfg.xs;
    for (var m = first; m <= 60; m += cfg.xs) {
      var x = Math.round(X(m)) + 0.5;
      mk('line', { x1: x, x2: x, y1: TOP, y2: BOT }, gg);
      var t = mk('text', { x: f1(X(m)), y: BOT + 19, 'text-anchor': 'middle' }, svg);
      t.textContent = fmt(m);
    }

    var gl = mk('g', { 'clip-path': 'url(#' + id + ')', fill: 'none', 'stroke-linejoin': 'round' }, svg);
    (cfg.lines || []).forEach(function (s) {
      var d = '';
      s.d.forEach(function (p, i) { d += (i ? 'L' : 'M') + f1(X(p[0])) + ' ' + f1(Y(p[1])); });
      mk('path', { d: d, stroke: s.c, 'stroke-width': s.w || 1 }, gl);
    });
  }

  var plots = document.querySelectorAll('.plot[data-chart]');
  for (var i = 0; i < plots.length; i++) {
    var cfg = C[plots[i].getAttribute('data-chart')];
    if (cfg) render(plots[i], cfg, i);
  }
})();
```
